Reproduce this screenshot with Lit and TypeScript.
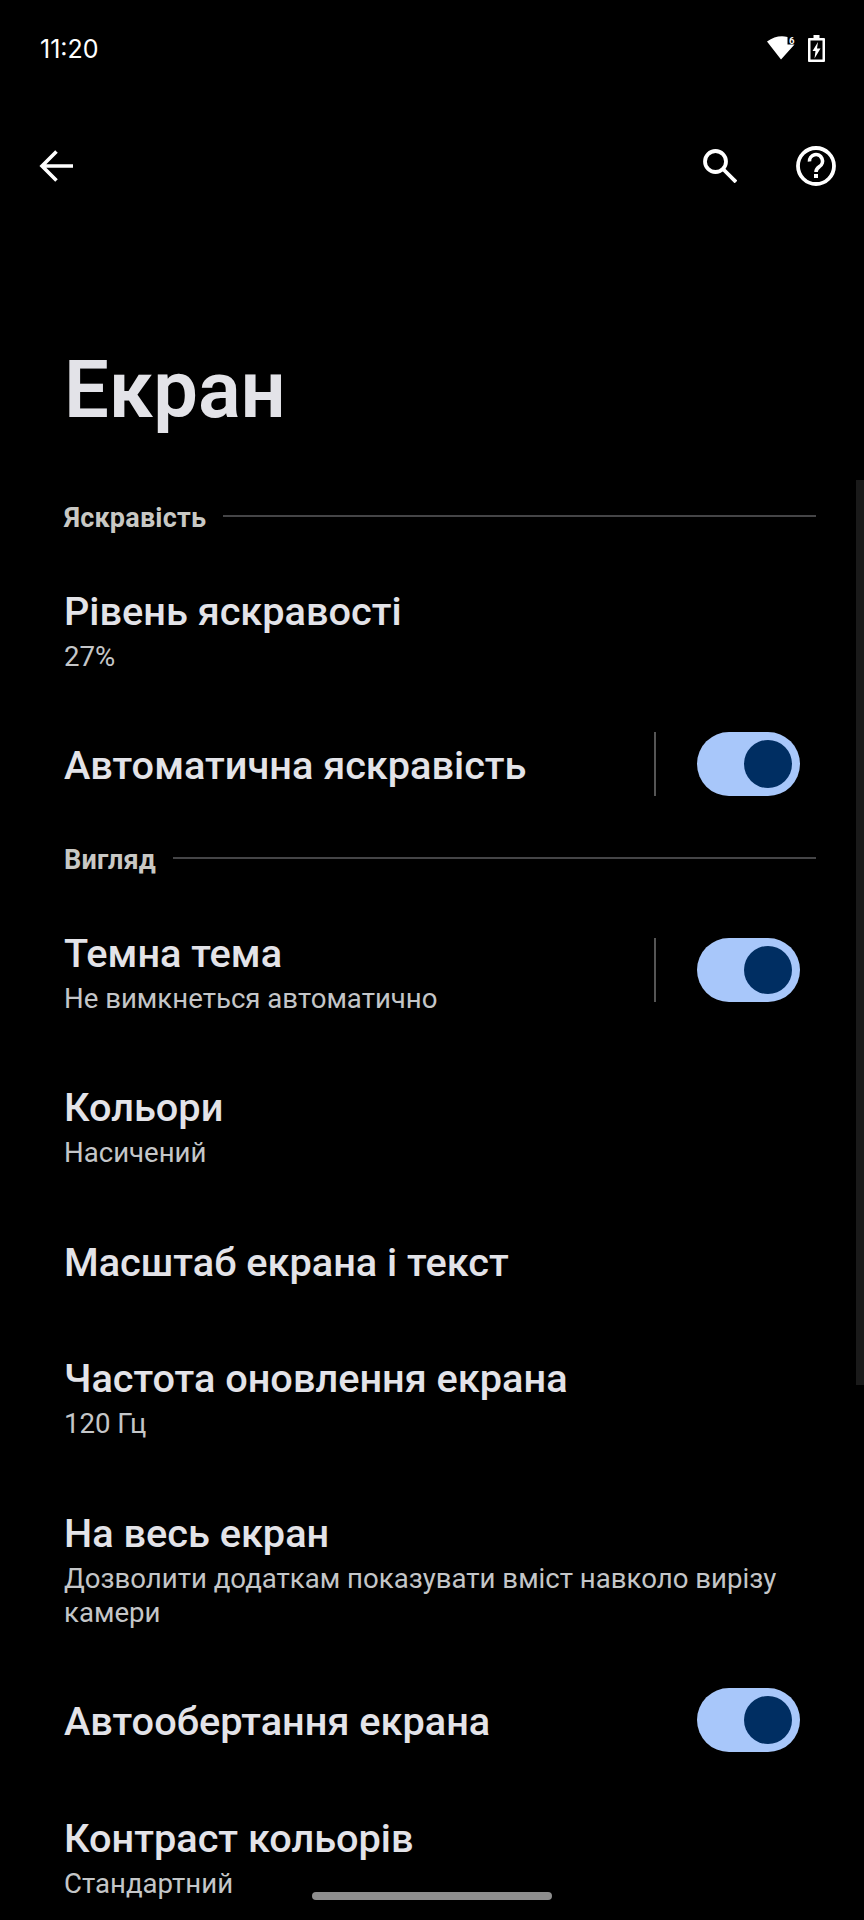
import { LitElement, html, css, svg } from "lit";
import { customElement } from "lit/decorators.js";

const toggle = html`<span class="toggle"><span class="thumb"></span></span>`;

@customElement("app-root")
export class AppRoot extends LitElement {
  static styles = css`
    :host {
      display: block;
      position: relative;
      width: 864px;
      height: 1920px;
      overflow: hidden;
      background: #000;
      color: #e3e3e8;
      font-family: Roboto, "Noto Sans", sans-serif;
    }
    .status {
      height: 96px;
      display: flex;
      align-items: center;
      justify-content: space-between;
      padding: 0 39px 0 40px;
      box-sizing: border-box;
    }
    .time {
      font-family: Inter, Lato, sans-serif;
      font-size: 25px;
      color: #fff;
      padding-top: 2px;
    }
    .status-icons {
      display: flex;
      gap: 13px;
      align-items: center;
    }
    .status-icons svg { display: block; }
    .toolbar {
      height: 140px;
      display: flex;
      align-items: center;
      padding: 0 28px 0 38px;
    }
    .toolbar svg { display: block; }
    .spacer { flex: 1; }
    .tool-right {
      display: flex;
      align-items: center;
      gap: 59px;
    }
    h1 {
      margin: 0;
      padding: 118px 0 0 64px;
      font-size: 79.500px;
      line-height: 72px;
      font-weight: 600;
      height: 127.500px;
      color: #e3e3e8;
    }
    .section {
      height: 71px;
      box-sizing: border-box;
      padding: 0 48px 0 64px;
      display: flex;
      align-items: center;
      gap: 17px;
    }
    .section-label {
      font-size: 27px;
      line-height: 32px;
      font-weight: 700;
      letter-spacing: 0.2px;
      color: #c8c8c4;
      position: relative;
      top: 0.5px;
    }
    .section-line {
      flex: 1;
      height: 2px;
      background: #454547;
      position: relative;
      top: -1px;
    }
    .row {
      display: flex;
      align-items: center;
      padding: 37px 0 35.500px 64px;
      box-sizing: border-box;
    }
    .row-text { flex: 1; min-width: 0; }
    .title {
      font-size: 39.700px;
      font-weight: 500;
      line-height: 44px;
      color: #e3e3e8;
    }
    .sub {
      font-size: 27.600px;
      line-height: 34px;
      margin: 6px 0 -2px;
      color: #c4c6c8;
      padding-right: 70px;
    }
    .row-end {
      display: flex;
      align-items: center;
      margin: -20px 64px -20px 0;
      position: relative;
      top: -2.500px;
    }
    .divider {
      width: 2px;
      height: 64px;
      background: #555;
      margin-right: 41px;
    }
    .toggle {
      display: flex;
      align-items: center;
      justify-content: flex-end;
      width: 103px;
      height: 64px;
      border-radius: 32px;
      background: #a8c7fa;
      padding-right: 8px;
      box-sizing: border-box;
    }
    .thumb {
      display: block;
      width: 48px;
      height: 48px;
      border-radius: 50%;
      background: #002e62;
    }
    .scrollbar {
      position: absolute;
      left: 856px;
      top: 480px;
      width: 8px;
      height: 905px;
      background: #1a1a1a;
    }
    .home {
      position: absolute;
      left: 312px;
      top: 1892px;
      width: 240px;
      height: 8px;
      border-radius: 4px;
      background: #8e8e8e;
    }
  `;

  private row(title: string, sub: string | null, end: unknown = null) {
    return html`<div class="row">
      <div class="row-text">
        <div class="title">${title}</div>
        ${sub ? html`<div class="sub">${sub}</div>` : null}
      </div>
      ${end ? html`<div class="row-end">${end}</div>` : null}
    </div>`;
  }

  private section(label: string) {
    return html`<div class="section">
      <span class="section-label">${label}</span>
      <span class="section-line"></span>
    </div>`;
  }

  render() {
    const withDivider = html`<span class="divider"></span>${toggle}`;
    return html`
      <div class="status">
        <span class="time">11:20</span>
        <span class="status-icons">
          <svg width="28" height="24" viewBox="0 0 28 24" aria-hidden="true">
            ${svg`<path fill="#fff" d="M0 5.500 Q10 -1.500 20.500 1 L20.500 8.500 L27.500 8.500 L14 23.500 Z"/>
            <text x="22" y="7.500" fill="#fff" opacity="0.99" font-size="9.500" font-weight="700" font-family="Roboto, sans-serif">6</text>`}
          </svg>
          <svg width="17" height="27" viewBox="0 0 17 27" aria-hidden="true">
            ${svg`<path fill="#fff" fill-rule="evenodd" d="M5.500 0 H11.500 V3 H16 Q17 3 17 4 V26 Q17 27 16 27 H1 Q0 27 0 26 V4 Q0 3 1 3 H5.500 Z M2.500 5.500 V24.500 H14.500 V5.500 Z"/>
            <path fill="#fff" d="M10 7 L4.500 16 H7.500 L6.500 23.500 L12.500 13.500 H9 Z"/>`}
          </svg>
        </span>
      </div>
      <div class="toolbar">
        <svg width="36" height="36" viewBox="0 0 36 36" aria-hidden="true">
          ${svg`<path fill="none" stroke="#fff" stroke-width="3.600" d="M35 18 H5 M18.500 3.500 L4 18 L18.500 32.500"/>`}
        </svg>
        <span class="spacer"></span>
        <span class="tool-right">
          <svg width="34" height="34" viewBox="0 0 34 34" aria-hidden="true">
            ${svg`<circle cx="12.500" cy="12.500" r="10.500" fill="none" stroke="#fff" stroke-width="3.800"/>
            <path d="M20 20 L33 33" fill="none" stroke="#fff" stroke-width="3.800"/>`}
          </svg>
          <svg width="40" height="40" viewBox="0 0 40 40" aria-hidden="true">
            ${svg`<circle cx="20" cy="20" r="18" fill="none" stroke="#fff" stroke-width="3.800"/>
            <path d="M13.500 15.500 A6.500 6.500 0 1 1 23.500 20.500 Q20 23 20 26" fill="none" stroke="#fff" stroke-width="3.600"/>
            <rect x="18" y="28" width="4" height="4" fill="#fff"/>`}
          </svg>
        </span>
      </div>
      <h1>Екран</h1>
      ${this.section("Яскравість")}
      ${this.row("Рівень яскравості", "27%")}
      ${this.row("Автоматична яскравість", null, withDivider)}
      ${this.section("Вигляд")}
      ${this.row("Темна тема", "Не вимкнеться автоматично", withDivider)}
      ${this.row("Кольори", "Насичений")}
      ${this.row("Масштаб екрана і текст", null)}
      ${this.row("Частота оновлення екрана", "120 Гц")}
      ${this.row("На весь екран", "Дозволити додаткам показувати вміст навколо вирізу камери")}
      ${this.row("Автообертання екрана", null, toggle)}
      ${this.row("Контраст кольорів", "Стандартний")}
      <div class="scrollbar"></div>
      <div class="home"></div>
    `;
  }
}
